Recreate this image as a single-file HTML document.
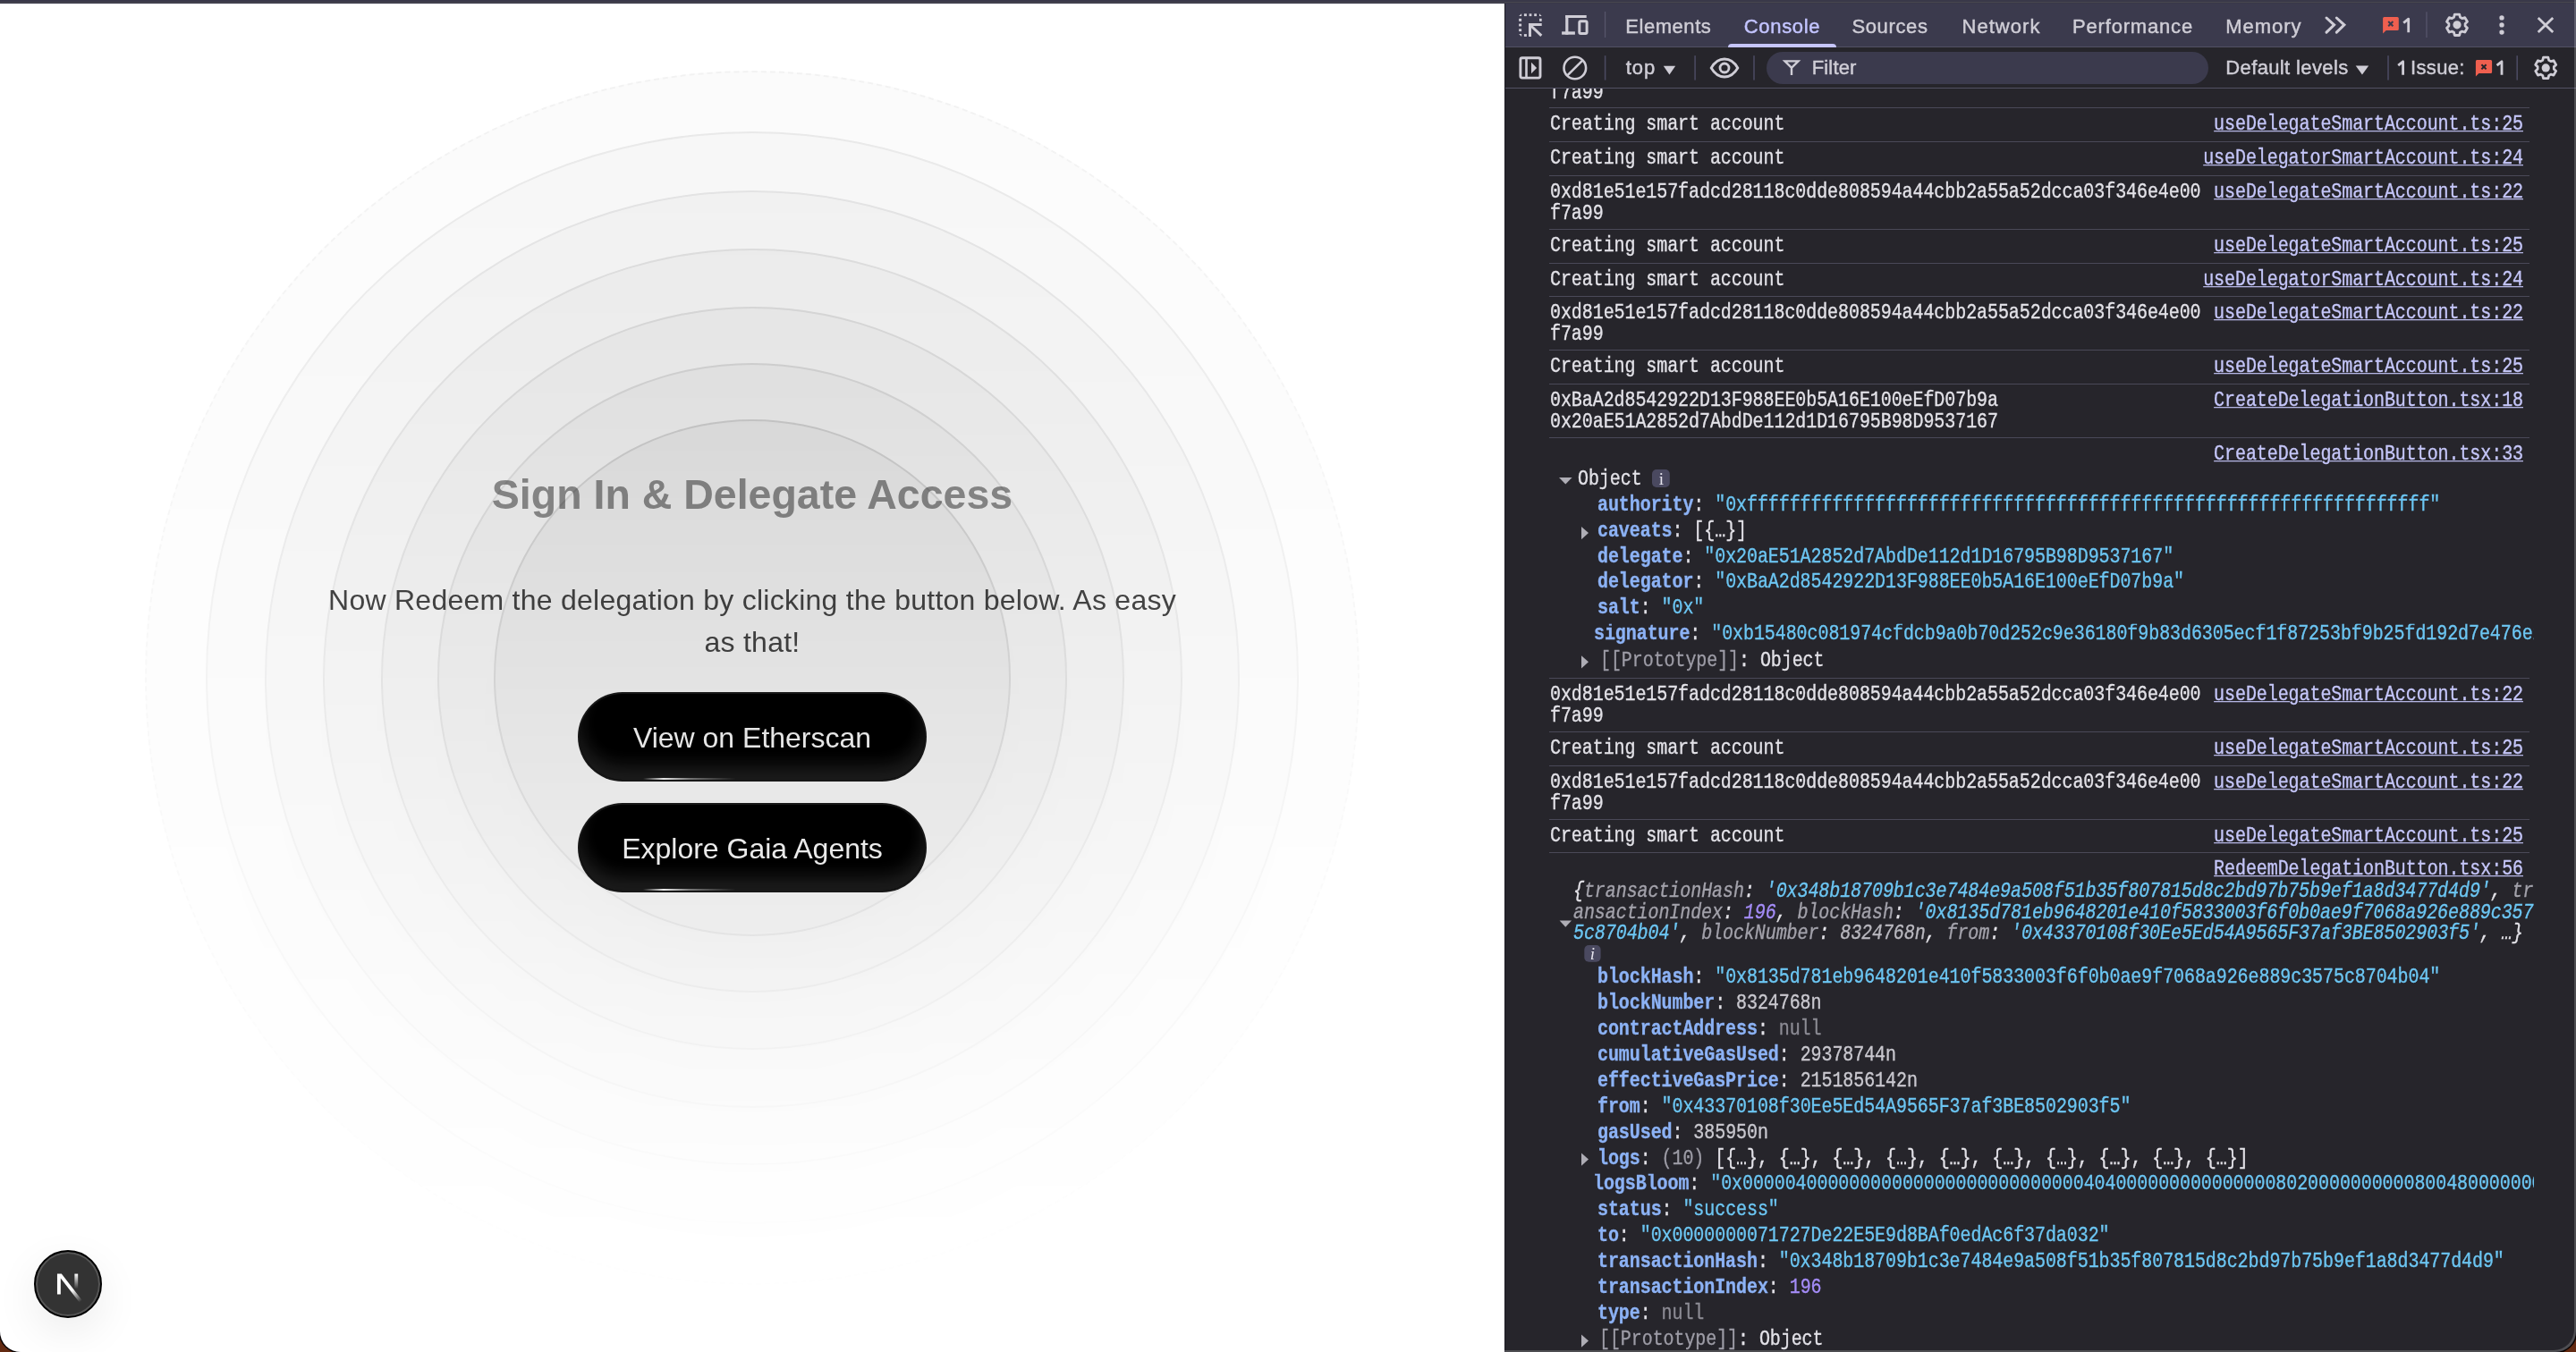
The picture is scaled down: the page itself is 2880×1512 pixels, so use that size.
<!DOCTYPE html>
<html><head><meta charset="utf-8"><style>
*{box-sizing:border-box}
html,body{margin:0;padding:0}
body{width:2880px;height:1512px;position:relative;overflow:hidden;background:#632a12;font-family:'Liberation Sans',sans-serif}
#win{position:absolute;left:0;top:0;width:2880px;height:1512px;border-radius:0 0 23px 23px;overflow:hidden;background:#393849;box-shadow:0 0 0 1.5px rgba(0,0,0,.9)}
#wb{position:absolute;left:0;top:0;width:2880px;height:1512px;border-radius:0 0 23px 23px;box-shadow:inset -2px -2px 0 rgba(255,255,255,.19);pointer-events:none}
#topline{position:absolute;left:0;top:2px;width:2880px;height:1px;background:#47464f}
#page{position:absolute;left:0;top:4px;width:1682px;height:1508px;background:#fff;overflow:hidden;will-change:transform}
.rip{position:absolute;left:0;top:0;width:1682px;height:1508px;pointer-events:none;
  -webkit-mask-image:linear-gradient(to bottom,#fff,transparent);mask-image:linear-gradient(to bottom,#fff,transparent)}
.c{position:absolute;border-radius:50%;background:rgba(9,9,11,.25);border:2px solid rgba(9,9,11,.85);
  box-shadow:0 40px 50px -10px rgba(0,0,0,.1),0 16px 20px -12px rgba(0,0,0,.1)}
h1{position:absolute;margin:0;left:0;width:1682px;text-align:center;font:bold 46.5px/1 'Liberation Sans',sans-serif;color:#939393}
.p{position:absolute;left:0;width:1682px;text-align:center;font:32px/47px 'Liberation Sans',sans-serif;color:#474747;letter-spacing:.25px}
.btn{position:absolute;left:646px;width:390px;height:100px;border-radius:100px;background:#000;border:2px solid rgba(255,255,255,.1);overflow:hidden;
  color:#fff;font:32px/98px 'Liberation Sans',sans-serif;text-align:center}
.btn .hl{position:absolute;inset:0;border-radius:100px;box-shadow:inset 0 -16px 20px rgba(255,255,255,.12)}
.btn .sp{position:absolute;left:71px;width:104px;height:2px;bottom:0px;background:linear-gradient(90deg,transparent,#fff 22%,rgba(255,255,255,.45) 50%,transparent);filter:blur(.3px)}
.btn span{position:relative}
#nx{position:absolute;left:38px;top:1394px;width:76px;height:76px;border-radius:50%;background:#333;border:2px solid #000;
  box-shadow:inset 0 0 0 2px #555,0 16px 48px rgba(0,0,0,.08)}
#dt{position:absolute;left:1682px;top:4px;width:1198px;height:1508px;background:#26252b;border-left:1px solid #1c1b23}
#tabbar{position:absolute;left:1683px;top:4px;width:1197px;height:48px;background:#3b3a4d}
.hl1{position:absolute;left:1683px;width:1197px;height:1px;background:#525163}
#filter{position:absolute;left:1975px;top:58px;width:494px;height:36px;border-radius:18px;background:#3b3a4d}
.sep{position:absolute;left:1732px;width:1096px;height:1px;background:#4a4958}
.t{position:absolute;white-space:pre}
.m{position:absolute;white-space:pre;font:20px/20px 'Liberation Mono',monospace;color:#e3e2e8;letter-spacing:-0.075px;transform:scaleY(1.15);transform-origin:0 15.33px;-webkit-text-stroke:0.3px currentColor}
.lk{color:#c5c6f9;text-decoration:underline;text-underline-offset:1px;text-decoration-thickness:1px}
.k{color:#8cb2f5;font-weight:bold}
.s{color:#6cc6f3}
.g{color:#9d9ca6}
.n{color:#a48cf7}
.b{color:#c9c8cf}
.nl{color:#8c8b94}
.gi{color:#a3a2ab}
.si{color:#6cc6f3}
.ni{color:#a48cf7}
.bi{color:#b9b8bf}
#ic{position:absolute;left:0;top:0}
#ctb{position:absolute;left:1683px;top:53px;width:1197px;height:46px;background:#26252b}
#dtx{position:absolute;left:0;top:0;width:2880px;height:1512px;will-change:transform}
</style></head>
<body>
<div id="win">
<div id="topline"></div>
<div id="page">
<h1 style="top:525.5px">Sign In &amp; Delegate Access</h1>
<div class="p" style="top:644px">Now Redeem the delegation by clicking the button below. As easy<br>as that!</div>
<div class="btn" style="top:770px"><div class="sp"></div><div class="hl"></div><span>View on Etherscan</span></div>
<div class="btn" style="top:894px"><div class="sp"></div><div class="hl"></div><span>Explore Gaia Agents</span></div>
<div class="rip">
<div class="c" style="left:162.00px;top:75.00px;width:1358.00px;height:1358.00px;opacity:0.06;border-style:dashed"></div>
<div class="c" style="left:229.60px;top:142.60px;width:1222.80px;height:1222.80px;opacity:0.09"></div>
<div class="c" style="left:295.60px;top:208.60px;width:1090.80px;height:1090.80px;opacity:0.11"></div>
<div class="c" style="left:360.50px;top:273.50px;width:961.00px;height:961.00px;opacity:0.13"></div>
<div class="c" style="left:425.50px;top:338.50px;width:831.00px;height:831.00px;opacity:0.155"></div>
<div class="c" style="left:489.00px;top:402.00px;width:704.00px;height:704.00px;opacity:0.185"></div>
<div class="c" style="left:552.40px;top:465.40px;width:577.20px;height:577.20px;opacity:0.25"></div>
</div>
<div id="nx"></div>
<svg style="position:absolute;left:0;top:-4px" width="200" height="1512" viewBox="0 0 200 1512">
<defs><linearGradient id="nb" x1="105" y1="112" x2="136" y2="152" gradientUnits="userSpaceOnUse"><stop stop-color="#fff"/><stop offset="1" stop-color="#fff" stop-opacity="0"/></linearGradient>
<linearGradient id="nc" x1="121" y1="54" x2="120.8" y2="106.9" gradientUnits="userSpaceOnUse"><stop stop-color="#fff"/><stop offset="1" stop-color="#fff" stop-opacity="0"/></linearGradient></defs>
<g transform="translate(46.8 1407.4) scale(0.318)">
<path d="M149.508 157.52L69.142 54H54V125.97H66.1136V69.3836L139.999 164.845C143.333 162.614 146.509 160.165 149.508 157.52Z" fill="url(#nb)"/>
<rect x="115" y="54" width="12" height="72" fill="url(#nc)"/>
</g></svg>
</div>
<div id="dt"></div>
<div id="dtx">
<div class="sep" style="top:120px"></div><div class="sep" style="top:158px"></div><div class="sep" style="top:196px"></div><div class="sep" style="top:256px"></div><div class="sep" style="top:294px"></div><div class="sep" style="top:331px"></div><div class="sep" style="top:391px"></div><div class="sep" style="top:429px"></div><div class="sep" style="top:489px"></div><div class="sep" style="top:758px"></div><div class="sep" style="top:818px"></div><div class="sep" style="top:856px"></div><div class="sep" style="top:916px"></div><div class="sep" style="top:953px"></div>
<div class="m" style="left:1733.00px;top:94.87px;">f7a99</div>
<div class="m" style="left:1733.00px;top:130.07px;">Creating smart account</div>
<div class="m lk" style="right:59.00px;top:130.07px">useDelegateSmartAccount.ts:25</div>
<div class="m" style="left:1733.00px;top:168.07px;">Creating smart account</div>
<div class="m lk" style="right:59.00px;top:168.07px">useDelegatorSmartAccount.ts:24</div>
<div class="m" style="left:1733.00px;top:206.27px;">0xd81e51e157fadcd28118c0dde808594a44cbb2a55a52dcca03f346e4e00</div>
<div class="m" style="left:1733.00px;top:230.07px;">f7a99</div>
<div class="m lk" style="right:59.00px;top:206.27px">useDelegateSmartAccount.ts:22</div>
<div class="m" style="left:1733.00px;top:266.07px;">Creating smart account</div>
<div class="m lk" style="right:59.00px;top:266.07px">useDelegateSmartAccount.ts:25</div>
<div class="m" style="left:1733.00px;top:304.07px;">Creating smart account</div>
<div class="m lk" style="right:59.00px;top:304.07px">useDelegatorSmartAccount.ts:24</div>
<div class="m" style="left:1733.00px;top:341.27px;">0xd81e51e157fadcd28118c0dde808594a44cbb2a55a52dcca03f346e4e00</div>
<div class="m" style="left:1733.00px;top:365.07px;">f7a99</div>
<div class="m lk" style="right:59.00px;top:341.27px">useDelegateSmartAccount.ts:22</div>
<div class="m" style="left:1733.00px;top:401.07px;">Creating smart account</div>
<div class="m lk" style="right:59.00px;top:401.07px">useDelegateSmartAccount.ts:25</div>
<div class="m" style="left:1733.00px;top:439.37px;">0xBaA2d8542922D13F988EE0b5A16E100eEfD07b9a</div>
<div class="m" style="left:1733.00px;top:463.37px;">0x20aE51A2852d7AbdDe112d1D16795B98D9537167</div>
<div class="m lk" style="right:59.00px;top:439.37px">CreateDelegationButton.tsx:18</div>
<div class="m lk" style="right:59.00px;top:498.87px">CreateDelegationButton.tsx:33</div>
<div class="m" style="left:1764.00px;top:526.97px;">Object</div>
<div class="m" style="left:1786.00px;top:555.77px;"><span class="k">authority</span>: <span class="s">"0xffffffffffffffffffffffffffffffffffffffffffffffffffffffffffffffff"</span></div>
<div class="m" style="left:1786.00px;top:584.67px;"><span class="k">caveats</span>: [{…}]</div>
<div class="m" style="left:1786.00px;top:613.57px;"><span class="k">delegate</span>: <span class="s">"0x20aE51A2852d7AbdDe112d1D16795B98D9537167"</span></div>
<div class="m" style="left:1786.00px;top:642.47px;"><span class="k">delegator</span>: <span class="s">"0xBaA2d8542922D13F988EE0b5A16E100eEfD07b9a"</span></div>
<div class="m" style="left:1786.00px;top:671.37px;"><span class="k">salt</span>: <span class="s">"0x"</span></div>
<div class="m" style="left:1782.00px;top:700.27px;width:1051px;overflow:hidden"><span class="k">signature</span>: <span class="s">"0xb15480c081974cfdcb9a0b70d252c9e36180f9b83d6305ecf1f87253bf9b25fd192d7e476e2a</span></div>
<div class="m" style="left:1789.00px;top:729.57px;"><span class="g">[[Prototype]]</span>: Object</div>
<div class="m" style="left:1733.00px;top:768.27px;">0xd81e51e157fadcd28118c0dde808594a44cbb2a55a52dcca03f346e4e00</div>
<div class="m" style="left:1733.00px;top:792.07px;">f7a99</div>
<div class="m lk" style="right:59.00px;top:768.27px">useDelegateSmartAccount.ts:22</div>
<div class="m" style="left:1733.00px;top:828.07px;">Creating smart account</div>
<div class="m lk" style="right:59.00px;top:828.07px">useDelegateSmartAccount.ts:25</div>
<div class="m" style="left:1733.00px;top:866.27px;">0xd81e51e157fadcd28118c0dde808594a44cbb2a55a52dcca03f346e4e00</div>
<div class="m" style="left:1733.00px;top:890.07px;">f7a99</div>
<div class="m lk" style="right:59.00px;top:866.27px">useDelegateSmartAccount.ts:22</div>
<div class="m" style="left:1733.00px;top:926.07px;">Creating smart account</div>
<div class="m lk" style="right:59.00px;top:926.07px">useDelegateSmartAccount.ts:25</div>
<div class="m lk" style="right:59.00px;top:963.37px">RedeemDelegationButton.tsx:56</div>
<div class="m" style="left:1759.00px;top:987.97px;font-style:italic">{<span class="gi">transactionHash</span>: <span class="si">'0x348b18709b1c3e7484e9a508f51b35f807815d8c2bd97b75b9ef1a8d3477d4d9'</span>, <span class="gi">tr</span></div>
<div class="m" style="left:1759.00px;top:1011.67px;font-style:italic"><span class="gi">ansactionIndex</span>: <span class="ni">196</span>, <span class="gi">blockHash</span>: <span class="si">'0x8135d781eb9648201e410f5833003f6f0b0ae9f7068a926e889c357</span></div>
<div class="m" style="left:1759.00px;top:1035.37px;font-style:italic"><span class="si">5c8704b04'</span>, <span class="gi">blockNumber</span>: <span class="bi">8324768n</span>, <span class="gi">from</span>: <span class="si">'0x43370108f30Ee5Ed54A9565F37af3BE8502903f5'</span>, …}</div>
<div class="m" style="left:1786.00px;top:1084.27px;"><span class="k">blockHash</span>: <span class="s">"0x8135d781eb9648201e410f5833003f6f0b0ae9f7068a926e889c3575c8704b04"</span></div>
<div class="m" style="left:1786.00px;top:1113.17px;"><span class="k">blockNumber</span>: <span class="b">8324768n</span></div>
<div class="m" style="left:1786.00px;top:1142.07px;"><span class="k">contractAddress</span>: <span class="nl">null</span></div>
<div class="m" style="left:1786.00px;top:1170.97px;"><span class="k">cumulativeGasUsed</span>: <span class="b">29378744n</span></div>
<div class="m" style="left:1786.00px;top:1199.87px;"><span class="k">effectiveGasPrice</span>: <span class="b">2151856142n</span></div>
<div class="m" style="left:1786.00px;top:1228.77px;"><span class="k">from</span>: <span class="s">"0x43370108f30Ee5Ed54A9565F37af3BE8502903f5"</span></div>
<div class="m" style="left:1786.00px;top:1257.67px;"><span class="k">gasUsed</span>: <span class="b">385950n</span></div>
<div class="m" style="left:1786.00px;top:1286.57px;"><span class="k">logs</span>: <span class="g">(10)</span> [{…}, {…}, {…}, {…}, {…}, {…}, {…}, {…}, {…}, {…}]</div>
<div class="m" style="left:1781.00px;top:1315.47px;width:1052px;overflow:hidden"><span class="k">logsBloom</span>: <span class="s">"0x00000400000000000000000000000000404000000000000000802000000000080048000000000000</span></div>
<div class="m" style="left:1786.00px;top:1344.37px;"><span class="k">status</span>: <span class="s">"success"</span></div>
<div class="m" style="left:1786.00px;top:1373.27px;"><span class="k">to</span>: <span class="s">"0x0000000071727De22E5E9d8BAf0edAc6f37da032"</span></div>
<div class="m" style="left:1786.00px;top:1402.17px;"><span class="k">transactionHash</span>: <span class="s">"0x348b18709b1c3e7484e9a508f51b35f807815d8c2bd97b75b9ef1a8d3477d4d9"</span></div>
<div class="m" style="left:1786.00px;top:1431.07px;"><span class="k">transactionIndex</span>: <span class="n">196</span></div>
<div class="m" style="left:1786.00px;top:1459.97px;"><span class="k">type</span>: <span class="nl">null</span></div>
<div class="m" style="left:1788.00px;top:1488.87px;"><span class="g">[[Prototype]]</span>: Object</div>

<div id="ctb"></div>
<div id="tabbar"></div>
<div class="hl1" style="top:52px"></div>
<div class="hl1" style="top:98px"></div>
<div id="filter"></div>
<div style="position:absolute;left:1932px;top:49px;width:121px;height:4px;background:#c6c5fb;border-radius:4px 4px 0 0"></div>
<div class="t" style="left:1817.30px;top:18.58px;font:normal 22px/22px 'Liberation Sans',sans-serif;color:#cfcdd6;letter-spacing:0.543px;-webkit-text-stroke:0.45px currentColor">Elements</div>
<div class="t" style="left:1949.70px;top:18.58px;font:normal 22px/22px 'Liberation Sans',sans-serif;color:#c3c4ff;letter-spacing:0.700px;-webkit-text-stroke:0.45px currentColor">Console</div>
<div class="t" style="left:2070.40px;top:18.58px;font:normal 22px/22px 'Liberation Sans',sans-serif;color:#cfcdd6;letter-spacing:0.633px;-webkit-text-stroke:0.45px currentColor">Sources</div>
<div class="t" style="left:2193.50px;top:18.58px;font:normal 22px/22px 'Liberation Sans',sans-serif;color:#cfcdd6;letter-spacing:1.033px;-webkit-text-stroke:0.45px currentColor">Network</div>
<div class="t" style="left:2317.00px;top:18.58px;font:normal 22px/22px 'Liberation Sans',sans-serif;color:#cfcdd6;letter-spacing:0.820px;-webkit-text-stroke:0.45px currentColor">Performance</div>
<div class="t" style="left:2488.30px;top:18.58px;font:normal 22px/22px 'Liberation Sans',sans-serif;color:#cfcdd6;letter-spacing:0.960px;-webkit-text-stroke:0.45px currentColor">Memory</div>
<div class="t" style="left:1817.80px;top:65.38px;font:normal 22px/22px 'Liberation Sans',sans-serif;color:#cfcdd6;letter-spacing:0.900px;-webkit-text-stroke:0.45px currentColor">top</div>
<div class="t" style="left:2025.70px;top:65.38px;font:normal 22px/22px 'Liberation Sans',sans-serif;color:#cfcdd6;letter-spacing:0.160px;-webkit-text-stroke:0.45px currentColor">Filter</div>
<div class="t" style="left:2488.30px;top:65.38px;font:normal 22px/22px 'Liberation Sans',sans-serif;color:#cfcdd6;letter-spacing:0.369px;-webkit-text-stroke:0.45px currentColor">Default levels</div>
<div class="t" style="left:2695.10px;top:65.38px;font:normal 22px/22px 'Liberation Sans',sans-serif;color:#cfcdd6;letter-spacing:0.320px;-webkit-text-stroke:0.45px currentColor">Issue:</div>

</div>
<svg id="ic" width="2880" height="1512" viewBox="0 0 2880 1512">
<g fill="#cfcdd6">
<!-- inspect dots -->
<rect x="1703.9" y="15.3" width="3" height="2.8"/><rect x="1709.6" y="15.3" width="2.8" height="2.8"/><rect x="1715.2" y="15.3" width="2.8" height="2.8"/>
<path d="M1698.1 18.1h3v-2.8z"/><path d="M1721 15.3v2.8h2.7z"/>
<rect x="1698.1" y="20.8" width="3" height="3"/><rect x="1698.1" y="26.6" width="3" height="2.8"/><rect x="1698.1" y="32.3" width="3" height="2.8"/>
<rect x="1721" y="20.8" width="2.7" height="3"/>
<path d="M1698.1 38.1h3v2.8z"/><rect x="1703.9" y="38.1" width="3" height="2.8"/>
<!-- device -->
<rect x="1750.2" y="17" width="23.5" height="3"/><rect x="1750.2" y="17" width="3.2" height="21.7"/><rect x="1746.1" y="35.3" width="14.8" height="3.4"/>
<!-- chevrons >> -->
<!-- kebab -->
<circle cx="2797" cy="19.9" r="2.7"/><circle cx="2797" cy="27.9" r="2.7"/><circle cx="2797" cy="36.1" r="2.7"/>
<!-- triangles -->
<path d="M1859.8 73.7h13.4l-6.7 9.7z"/><path d="M2633.7 73.6h14.5l-7.25 10z"/>
<path d="M1712 69.7l6.1 6.3l-6.1 6.3z"/>
<!-- gear centers -->
<circle cx="2747" cy="27.8" r="4.6"/><circle cx="2846.2" cy="75.9" r="4.6"/>
</g>
<g fill="none" stroke="#cfcdd6" stroke-width="3">
<path d="M1710.5 40.9V27.4H1723.7M1711.3 28.5L1723.3 39.8" stroke-linejoin="miter"/>
<rect x="1765.8" y="23.8" width="8.3" height="13.7" rx="1.5"/>
<path d="M2601 20l8.6 7.9l-8.6 8.3M2612.3 20l8.6 7.9l-8.6 8.3" stroke-linecap="round"/>
<path d="M2837.7 19.9L2854.2 36.1M2854.2 19.9L2837.7 36.1" stroke-width="2.8"/>
<path d="M2687.2 25.6L2692.7 21.2V36.2" stroke-width="2.8" stroke-linejoin="round"/>
<path d="M2681.2 73.2L2686.6 68.8V83.8" stroke-width="2.8" stroke-linejoin="round"/>
<path d="M2791.6 73.2L2797 68.8V83.8" stroke-width="2.8" stroke-linejoin="round"/>
<rect x="1699.9" y="64.7" width="22.1" height="22.4" rx="2" stroke-width="2.9"/>
<path d="M1706.5 65v22" stroke-width="2.6"/>
<circle cx="1760.8" cy="76" r="12.3" stroke-width="2.6"/>
<path d="M1769.5 67.3L1752.1 84.7" stroke-width="2.6"/>
<path d="M1913.2 76c4-7 9.5-10 14.8-10s10.8 3 14.8 10c-4 7-9.5 10-14.8 10s-10.8-3-14.8-10z" stroke-width="2.8"/>
<circle cx="1928" cy="76" r="5" stroke-width="2.8"/>
<path d="M1995.5 68.4h15l-7.5 7.5z M2003 75.5v8.5" stroke-width="2.4" stroke-linejoin="miter"/>
</g>
<g id="gear" fill="none" stroke="#cfcdd6" stroke-width="2.8" stroke-linejoin="round">
<path id="gp" d="M2744.30 16.11 L2749.70 16.11 L2750.45 19.27 L2752.66 20.55 L2755.78 19.62 L2758.48 24.29 L2756.11 26.52 L2756.11 29.08 L2758.48 31.31 L2755.78 35.98 L2752.66 35.05 L2750.45 36.33 L2749.70 39.49 L2744.30 39.49 L2743.55 36.33 L2741.34 35.05 L2738.22 35.98 L2735.52 31.31 L2737.89 29.08 L2737.89 26.52 L2735.52 24.29 L2738.22 19.62 L2741.34 20.55 L2743.55 19.27Z"/>
<path d="M2843.50 64.21 L2848.90 64.21 L2849.65 67.37 L2851.86 68.65 L2854.98 67.72 L2857.68 72.39 L2855.31 74.62 L2855.31 77.18 L2857.68 79.41 L2854.98 84.08 L2851.86 83.15 L2849.65 84.43 L2848.90 87.59 L2843.50 87.59 L2842.75 84.43 L2840.54 83.15 L2837.42 84.08 L2834.72 79.41 L2837.09 77.18 L2837.09 74.62 L2834.72 72.39 L2837.42 67.72 L2840.54 68.65 L2842.75 67.37Z"/>
</g>
<g fill="#56556b">
<rect x="1793.9" y="13" width="1.3" height="29"/><rect x="2712.3" y="13.3" width="1.3" height="28.7"/>
</g>
<g fill="#4a4960">
<rect x="1793.8" y="62.2" width="1.6" height="27.4"/><rect x="1894.3" y="62.2" width="1.6" height="27.4"/><rect x="1960.2" y="62.2" width="1.6" height="27.4"/>
<rect x="2669.2" y="62.2" width="1.6" height="27.4"/><rect x="2813.4" y="62.2" width="1.6" height="27.4"/>
</g>
<g fill="#aeadb5">
<path d="M1743 534h14.6l-7.3 7.6z"/>
<path d="M1768 588.9l8 7.15l-8 7.15z"/>
<path d="M1768 733.2l8 7.15l-8 7.15z"/>
<path d="M1743.6 1029.4h13.4l-6.7 7.3z"/>
<path d="M1768 1289.4l8 7.15l-8 7.15z"/>
<path d="M1768 1492.4l8 7.15l-8 7.15z"/>
</g>
<g fill="#4a4960">
<rect x="1847" y="525" width="19.8" height="20" rx="5"/>
<rect x="1771.3" y="1057" width="18.3" height="18.8" rx="5"/>
</g>
<text x="1857.3" y="542" font-family="'Liberation Serif',serif" font-size="19" fill="#e6e5ee" text-anchor="middle">i</text>
<text x="1780.5" y="1073" font-family="'Liberation Serif',serif" font-style="italic" font-size="19" fill="#e6e5ee" text-anchor="middle">i</text>
<!-- error badges -->
<path d="M2665.6 19.1h14.7a1.5 1.5 0 0 1 1.5 1.5v11.9a1.5 1.5 0 0 1-1.5 1.5h-12.6l-3.6 3.6v-17a1.5 1.5 0 0 1 1.5-1.5z" fill="#ef5f4f"/>
<path d="M2670.2 24l5.2 5.2M2675.4 24l-5.2 5.2" stroke="#3b3a4d" stroke-width="2"/>
<path d="M2769.3 67h15.3a1.5 1.5 0 0 1 1.5 1.5v12a1.5 1.5 0 0 1-1.5 1.5h-13.2l-3.5 3.6v-17.1a1.5 1.5 0 0 1 1.4-1.5z" fill="#ef5f4f"/>
<path d="M2774.4 72.2l5.2 5.2M2779.6 72.2l-5.2 5.2" stroke="#26252b" stroke-width="2"/>
</svg>
<div id="wb"></div>
</div>
</body></html>
